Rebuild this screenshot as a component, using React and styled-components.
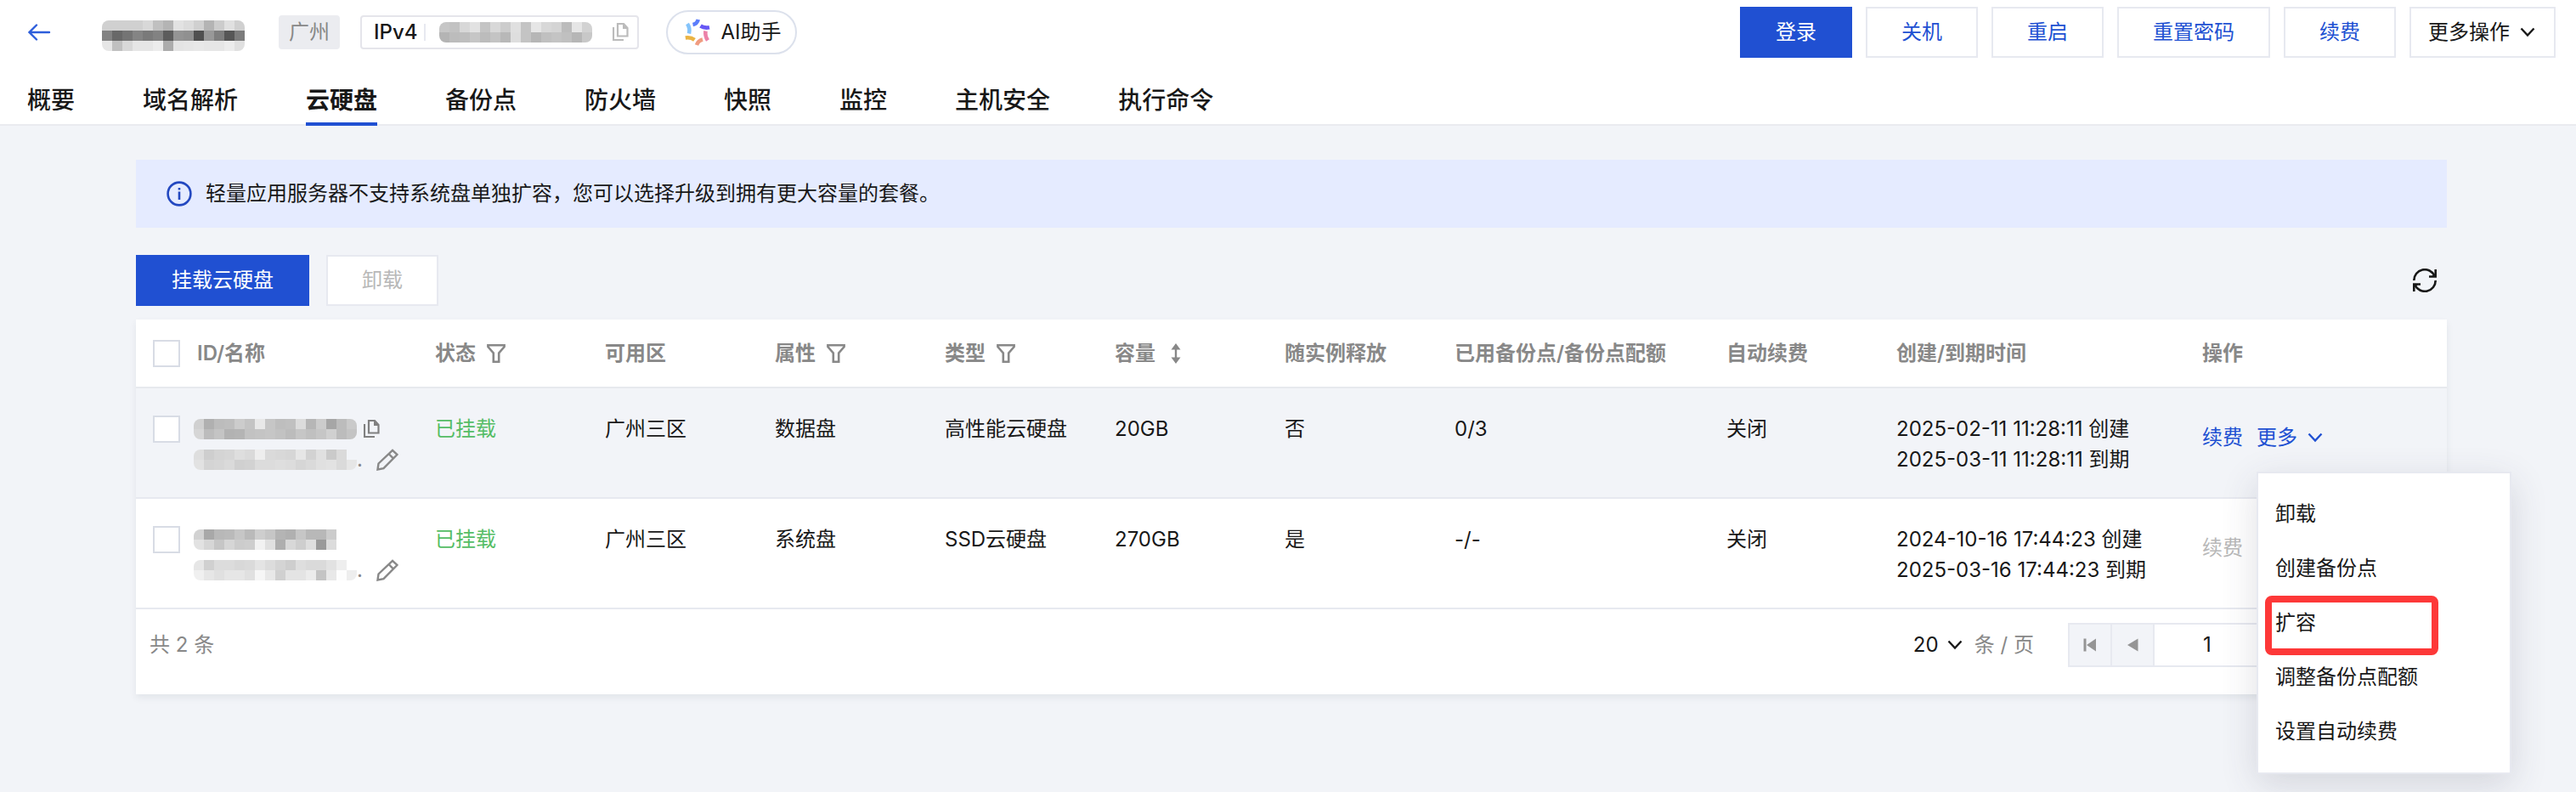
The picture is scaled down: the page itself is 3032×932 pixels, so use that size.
import React, { useState } from 'react';
import styled, { createGlobalStyle, css } from 'styled-components';

const tabs = ['概要', '域名解析', '云硬盘', '备份点', '防火墙', '快照', '监控', '主机安全', '执行命令'];

const columns = [
  { title: 'ID/名称', width: 280 },
  { title: '状态', width: 200, icon: 'filter' },
  { title: '可用区', width: 200 },
  { title: '属性', width: 200, icon: 'filter' },
  { title: '类型', width: 200, icon: 'filter' },
  { title: '容量', width: 200, icon: 'sort' },
  { title: '随实例释放', width: 200 },
  { title: '已用备份点/备份点配额', width: 320 },
  { title: '自动续费', width: 200 },
  { title: '创建/到期时间', width: 360 },
  { title: '操作', width: 308 },
];

const menuItems = ['卸载', '创建备份点', '扩容', '调整备份点配额', '设置自动续费'];

// masked strings, one hex shade per 12px cell
const masks = {
  instance: [
    'd0 d0 d0 d0 d8 c0 b4 e2 dc d0 b4 cc e0 d0',
    '82 68 74 84 7a 82 5c 94 90 50 98 7e 56 7c',
    'e6 c0 d8 e6 e6 ec ac e4 e6 e8 e6 e6 ec e0',
  ],
  ip: [
    'c6 c2 d8 e2 c4 d8 cc e0 c4 e6 d8 d4 bc e6 d2',
    'b4 bc be c6 bc c4 b8 de c4 b6 c0 c4 c0 b6 c8',
  ],
  disk1: [
    'd0 b0 bc be cc c4 e8 c6 be c0 dc b6 cc a6 bc ca',
    'd6 bc c4 b2 b4 c2 c4 c6 c2 bc c6 c0 c6 d0 bc c4',
  ],
  name1: [
    'de ce d4 d6 de da ee da d8 d6 e6 d2 e0 ca da ff',
    'e2 d4 d6 da d0 d2 dc dc de dc d6 da e0 e2 da e6',
  ],
  disk2: [
    'd2 a8 b8 ba c6 ba ce c6 b4 b0 c6 b8 b8 cc ff ff',
    'e2 d6 c6 d6 cc ce f2 e0 ae d8 ce de 9a dc ff ff',
  ],
  name2: [
    'e6 d0 dc dc d8 da e4 dc d4 ce de da da e2 ee ff',
    'f0 e6 e0 e6 e6 e0 f6 e8 d0 e4 e4 ec c4 e8 fd ee',
  ],
};

const disks = [
  {
    id: 'data',
    mask: [masks.disk1, masks.name1],
    copy: true,
    zone: '广州三区',
    attr: '数据盘',
    type: '高性能云硬盘',
    size: '20GB',
    release: '否',
    quota: '0/3',
    renew: '关闭',
    created: '2025-02-11 11:28:11 创建',
    expires: '2025-03-11 11:28:11 到期',
  },
  {
    id: 'system',
    mask: [masks.disk2, masks.name2],
    zone: '广州三区',
    attr: '系统盘',
    type: 'SSD云硬盘',
    size: '270GB',
    release: '是',
    quota: '-/-',
    renew: '关闭',
    created: '2024-10-16 17:44:23 创建',
    expires: '2025-03-16 17:44:23 到期',
    locked: true,
  },
];

function Mosaic({ rows }) {
  const cells = rows.map((row) => row.split(' '));
  return (
    <MosaicSvg
      width={cells[0].length * 12}
      height={cells.length * 12}
      shapeRendering="crispEdges"
      aria-hidden="true"
    >
      {cells.map((row, y) =>
        row.map((shade, x) => (
          <rect
            key={`${x}-${y}`}
            x={x * 12}
            y={y * 12}
            width="12"
            height="12"
            fill={shade === 'ff' ? 'none' : `#${shade}${shade}${shade}`}
          />
        ))
      )}
    </MosaicSvg>
  );
}

const ChevronIcon = () => (
  <svg width="18" height="12" viewBox="0 0 18 12" fill="none" stroke="currentColor" strokeWidth="2.4">
    <path d="M1.5 1.5 9 9.5l7.5-8" />
  </svg>
);

const BackIcon = () => (
  <svg width="28" height="20" viewBox="0 0 28 20" fill="none" stroke="currentColor" strokeWidth="2.4">
    <path d="M26 10H3M11 1.5 2.5 10l8.5 8.5" strokeLinecap="round" />
  </svg>
);

const CopyIcon = () => (
  <svg width="19" height="22" viewBox="0 0 19 22" fill="none" stroke="currentColor" strokeWidth="2.2">
    <path d="M6 1h7l4.5 5v9.5H6z" />
    <path d="M12 1v6h6z" fill="currentColor" stroke="none" />
    <path d="M1 5v15h12" />
  </svg>
);

const PencilIcon = () => (
  <svg width="26" height="26" viewBox="0 0 26 26" fill="none" stroke="currentColor" strokeWidth="2.4">
    <path d="M1.5 24.5 2.5 17.5 19 1.8 24.4 7 8.5 23.2z" />
    <path d="M14.5 6l5.4 5.4" />
  </svg>
);

const FilterIcon = () => (
  <svg width="22" height="22" viewBox="0 0 22 22" fill="none" stroke="currentColor" strokeWidth="2.6">
    <path d="M1.4 1.3H20.6V3L14.2 10.5V20.7H7.8V10.5L1.4 3z" />
  </svg>
);

const SortIcon = () => (
  <svg width="12" height="24" viewBox="0 0 12 24" fill="currentColor">
    <path d="M6 0l5.5 7.500H7.2v9h4.3L6 24 .5 16.5h4.3v-9H.5z" />
  </svg>
);

const InfoIcon = () => (
  <svg width="30" height="30" viewBox="0 0 30 30" fill="none" stroke="currentColor" strokeWidth="2.6">
    <circle cx="15" cy="15" r="13.4" />
    <path d="M15 12.5v9.500M15 8v2.6" />
  </svg>
);

const RefreshIcon = () => (
  <svg width="28" height="28" viewBox="0 0 28 28" fill="none" stroke="currentColor" strokeWidth="2.6">
    <path d="M1.3 14A12.7 12.7 0 0 1 25.5 8.5M26.7 14A12.7 12.7 0 0 1 2.5 19.5" />
    <path d="M26.7 1v8.5H19M1.3 27V18.5H9" />
    <path d="M27 5v5h-6zM1 23v-5h6z" fill="currentColor" stroke="none" />
  </svg>
);

const AssistantIcon = () => (
  <svg width="30" height="32" viewBox="0 0 30 32" fill="none" strokeWidth="4.6">
    <path d="M9.5 7Q14.5 6 15.8 1" stroke="#5b7dfb" />
    <path d="M18.5 8.5Q23 11.5 29 10.2" stroke="#6657f5" />
    <path d="M24.5 14.5Q23.5 20 27 25.5" stroke="#ec82a8" />
    <path d="M21 24.5Q15.5 26 14 31" stroke="#f09c80" />
    <path d="M.8 22.5Q7 21.5 11.5 24.8" stroke="#eab444" />
    <path d="M3 6Q6.5 11 5 17.5" stroke="#84c4fb" />
  </svg>
);

const FirstIcon = () => (
  <svg width="16" height="16" viewBox="0 0 16 16" fill="currentColor">
    <path d="M.5.5h3v15h-3zM15 .5v15L4 8z" />
  </svg>
);

const PrevIcon = () => (
  <svg width="16" height="16" viewBox="0 0 16 16" fill="currentColor">
    <path d="M14.5.5v15L2 8z" />
  </svg>
);

function Header() {
  return (
    <TopBar>
      <TitleRow>
        <BackLink href="#" aria-label="返回">
          <BackIcon />
        </BackLink>
        <InstanceName>
          <Mosaic rows={masks.instance} />
        </InstanceName>
        <Region>广州</Region>
        <IpBox>
          <IpLabel>IPv4</IpLabel>
          <Mosaic rows={masks.ip} />
          <IconButton $tone="#bbbbbb" aria-label="复制IP">
            <CopyIcon />
          </IconButton>
        </IpBox>
        <Assistant type="button">
          <AssistantIcon />
          AI助手
        </Assistant>
        <HeaderActions>
          <Button $primary>登录</Button>
          <Button>关机</Button>
          <Button>重启</Button>
          <Button>重置密码</Button>
          <Button>续费</Button>
          <MoreButton>
            更多操作
            <ChevronIcon />
          </MoreButton>
        </HeaderActions>
      </TitleRow>
      <Tabs>
        {tabs.map((tab) => (
          <Tab key={tab} href="#" $active={tab === '云硬盘'}>
            {tab}
          </Tab>
        ))}
      </Tabs>
    </TopBar>
  );
}

function RowMenu() {
  return (
    <Menu>
      {menuItems.map((item) => (
        <MenuItem key={item}>
          <MenuButton type="button">{item}</MenuButton>
          {item === '扩容' && <Highlight />}
        </MenuItem>
      ))}
    </Menu>
  );
}

function DiskRow({ disk, open, onToggle }) {
  return (
    <Row $hover={open}>
      <Cell>
        <Checkbox aria-label={`选择${disk.attr}`} />
      </Cell>
      <Cell>
        <IdLine>
          <Mosaic rows={disk.mask[0]} />
          {disk.copy && (
            <IconButton $tone="#808080" aria-label="复制ID">
              <CopyIcon />
            </IconButton>
          )}
        </IdLine>
        <IdLine>
          <Mosaic rows={disk.mask[1]} />
          <Ellipsis>.</Ellipsis>
          <IconButton $tone="#888888" aria-label="编辑名称">
            <PencilIcon />
          </IconButton>
        </IdLine>
      </Cell>
      <Cell>
        <Status>已挂载</Status>
      </Cell>
      <Cell>{disk.zone}</Cell>
      <Cell>{disk.attr}</Cell>
      <Cell>{disk.type}</Cell>
      <Cell>{disk.size}</Cell>
      <Cell>{disk.release}</Cell>
      <Cell>{disk.quota}</Cell>
      <Cell>{disk.renew}</Cell>
      <Cell>
        <div>{disk.created}</div>
        <div>{disk.expires}</div>
      </Cell>
      <Cell>
        <Operations>
          <LinkButton disabled={disk.locked}>续费</LinkButton>
          {!disk.locked && (
            <MenuAnchor>
              <LinkButton onClick={onToggle} aria-expanded={open}>
                更多
                <ChevronIcon />
              </LinkButton>
              {open && <RowMenu />}
            </MenuAnchor>
          )}
        </Operations>
      </Cell>
    </Row>
  );
}

function Pagination() {
  return (
    <Footer>
      <Total>共 2 条</Total>
      <PageSize>
        <SelectWrap>
          <Select defaultValue="20" aria-label="每页条数">
            <option>10</option>
            <option>20</option>
            <option>50</option>
          </Select>
          <ChevronIcon />
        </SelectWrap>
        条 / 页
      </PageSize>
      <Pager>
        <PageButton aria-label="首页">
          <FirstIcon />
        </PageButton>
        <PageButton aria-label="上一页">
          <PrevIcon />
        </PageButton>
        <PageField>
          <PageInput defaultValue="1" aria-label="页码" />
        </PageField>
        <PageButton aria-label="下一页" $flip>
          <PrevIcon />
        </PageButton>
        <PageButton aria-label="末页" $flip>
          <FirstIcon />
        </PageButton>
      </Pager>
    </Footer>
  );
}

function App() {
  const [openRow, setOpenRow] = useState('data');

  const toggleRow = (id) => {
    setOpenRow(openRow === id ? null : id);
  };

  return (
    <Page>
      <GlobalStyle />
      <Header />
      <Main>
        <Notice>
          <InfoIcon />
          轻量应用服务器不支持系统盘单独扩容，您可以选择升级到拥有更大容量的套餐。
        </Notice>
        <Toolbar>
          <Button $primary>挂载云硬盘</Button>
          <Button disabled>卸载</Button>
          <Refresh aria-label="刷新">
            <RefreshIcon />
          </Refresh>
        </Toolbar>
        <Panel>
          <Table>
            <colgroup>
              <Col $width={52} />
              {columns.map((column) => (
                <Col key={column.title} $width={column.width} />
              ))}
            </colgroup>
            <thead>
              <tr>
                <HeadCell>
                  <Checkbox aria-label="全选" />
                </HeadCell>
                {columns.map((column) => (
                  <HeadCell key={column.title}>
                    <HeadLabel $gap={column.icon === 'sort' ? 18 : 13}>
                      {column.title}
                      {column.icon === 'filter' && <FilterIcon />}
                      {column.icon === 'sort' && <SortIcon />}
                    </HeadLabel>
                  </HeadCell>
                ))}
              </tr>
            </thead>
            <tbody>
              {disks.map((disk) => (
                <DiskRow
                  key={disk.id}
                  disk={disk}
                  open={openRow === disk.id}
                  onToggle={() => toggleRow(disk.id)}
                />
              ))}
            </tbody>
          </Table>
          <Pagination />
        </Panel>
      </Main>
    </Page>
  );
}

const GlobalStyle = createGlobalStyle`
  * {
    box-sizing: border-box;
  }

  body {
    background: #f2f4f8;
    color: #181818;
    font-family: Inter, 'Noto Sans CJK SC', sans-serif;
    font-size: 24px;
    line-height: 36px;
    margin: 0;
  }

  button,
  input,
  select {
    color: inherit;
    font: inherit;
  }

  button {
    cursor: pointer;
  }

  svg {
    display: block;
    flex: none;
  }
`;

const Page = styled.div`
  min-height: 100vh;
`;

const MosaicSvg = styled.svg`
  border-radius: 8px;
`;

const TopBar = styled.header`
  background: #ffffff;
  border-bottom: 2px solid #eaebef;
`;

const TitleRow = styled.div`
  align-items: center;
  display: flex;
  padding: 8px 24px 0 32px;
`;

const BackLink = styled.a`
  color: #2d5edb;
`;

const InstanceName = styled.div`
  margin: 8px 40px 0 60px;
`;

const Region = styled.span`
  background: #ebecf0;
  border-radius: 4px;
  color: #888888;
  line-height: 40px;
  padding: 0 12px;
`;

const IpBox = styled.div`
  align-items: center;
  border: 2px solid #e5e5eb;
  border-radius: 4px;
  display: flex;
  height: 40px;
  margin-left: 24px;
  padding: 0 10px 0 14px;

  ${MosaicSvg} {
    margin-right: 24px;
  }
`;

const IpLabel = styled.span`
  border-right: 2px solid #e7e9f0;
  font-weight: 500;
  line-height: 20px;
  margin-right: 16px;
  padding-right: 8px;
`;

const IconButton = styled.button`
  background: none;
  border: 0;
  color: ${({ $tone }) => $tone};
  padding: 0;
`;

const Assistant = styled.button`
  align-items: center;
  background: #ffffff;
  border: 2px solid #dce1ec;
  border-radius: 26px;
  display: flex;
  gap: 12px;
  height: 52px;
  margin-left: 32px;
  padding: 0 16px 0 20px;
`;

const HeaderActions = styled.div`
  display: flex;
  gap: 16px;
  margin-left: auto;
`;

const buttonTone = ({ $primary }) =>
  $primary
    ? css`
        background: #2050d2;
        border-color: #2050d2;
        color: #ffffff;
      `
    : css`
        background: #ffffff;
        border-color: #e7e9f0;
        color: #2050d2;
      `;

const Button = styled.button`
  align-items: center;
  border: 2px solid;
  display: flex;
  height: 60px;
  padding: 0 40px;
  white-space: nowrap;
  ${buttonTone};

  &:disabled {
    color: #b8b8b8;
    cursor: default;
  }
`;

const MoreButton = styled(Button)`
  color: #181818;
  gap: 12px;
  padding: 0 22px 0 20px;
`;

const Tabs = styled.nav`
  display: flex;
  gap: 80px;
  padding: 20px 32px 0;
`;

const Tab = styled.a`
  color: inherit;
  font-size: 28px;
  font-weight: 500;
  line-height: 60px;
  margin-bottom: -2px;
  text-decoration: none;
  ${({ $active }) =>
    $active &&
    css`
      box-shadow: inset 0 -4px #2050d2;
      font-weight: 700;
    `};
`;

const Main = styled.main`
  padding: 40px 152px 40px 160px;
`;

const Notice = styled.div`
  align-items: center;
  background: #e5ebff;
  display: flex;
  gap: 16px;
  min-height: 80px;
  padding: 0 36px;

  svg {
    color: #2348c0;
  }
`;

const Toolbar = styled.div`
  display: flex;
  gap: 20px;
  padding: 32px 12px 16px 0;
`;

const Refresh = styled.button`
  background: none;
  border: 0;
  margin-left: auto;
  padding: 0;
`;

const Panel = styled.section`
  background: #ffffff;
  box-shadow: 0 4px 8px rgba(54, 58, 80, 0.08);
`;

const Table = styled.table`
  border-collapse: separate;
  border-spacing: 0;
  table-layout: fixed;
  width: 100%;
`;

const Col = styled.col`
  width: ${({ $width }) => $width}px;
`;

const Row = styled.tr`
  background: ${({ $hover }) => ($hover ? '#f2f4f8' : '#ffffff')};
`;

const HeadCell = styled.th`
  border-bottom: 2px solid #e7e9ee;
  color: #888888;
  font-weight: 600;
  height: 81px;
  padding: 0 0 0 20px;
  text-align: left;
`;

const HeadLabel = styled.span`
  align-items: center;
  display: flex;
  gap: ${({ $gap }) => $gap}px;
`;

const Cell = styled.td`
  border-bottom: 2px solid #e7e9f0;
  padding: 30px 0 26px 20px;
  vertical-align: top;
  white-space: nowrap;
`;

const Checkbox = styled.input.attrs({ type: 'checkbox' })`
  appearance: none;
  background: #ffffff;
  border: 2px solid #d8dce5;
  display: block;
  height: 32px;
  margin: 2px 0;
  width: 32px;
`;

const IdLine = styled.div`
  align-items: center;
  display: flex;
  gap: 8px;
  height: 36px;
  margin-left: -4px;
`;

const Ellipsis = styled.span`
  color: #888888;
  margin: 0 8px 0 -8px;
`;

const Status = styled.span`
  color: #55bd65;
`;

const Operations = styled.div`
  display: flex;
  gap: 16px;
  padding-top: 10px;
`;

const LinkButton = styled.button`
  align-items: center;
  background: none;
  border: 0;
  color: #2050d2;
  display: flex;
  gap: 12px;
  padding: 0;

  &:disabled {
    color: #b8b8b8;
    cursor: default;
  }
`;

const MenuAnchor = styled.div`
  position: relative;
`;

const Menu = styled.ul`
  background: #ffffff;
  border: 2px solid #e7e9f0;
  box-shadow: 0 12px 40px rgba(54, 58, 80, 0.16);
  left: 0;
  list-style: none;
  margin: 0;
  padding: 16px 0;
  position: absolute;
  top: calc(100% + 22px);
  width: 300px;
  z-index: 2;
`;

const MenuItem = styled.li`
  position: relative;
`;

const MenuButton = styled.button`
  background: none;
  border: 0;
  display: block;
  height: 64px;
  padding: 0 20px;
  text-align: left;
  width: 100%;
`;

const Highlight = styled.span`
  border: 8px solid #fd3838;
  border-radius: 8px;
  height: 70px;
  left: 8px;
  pointer-events: none;
  position: absolute;
  top: 0;
  width: 204px;
`;

const Footer = styled.footer`
  align-items: center;
  color: #888888;
  display: flex;
  padding: 16px 20px 32px 16px;
`;

const Total = styled.span`
  margin-right: auto;
`;

const PageSize = styled.div`
  align-items: center;
  display: flex;
  gap: 14px;
  margin-right: 40px;
`;

const SelectWrap = styled.label`
  align-items: center;
  color: #181818;
  display: flex;
  gap: 10px;
`;

const Select = styled.select`
  appearance: none;
  background: none;
  border: 0;
  padding: 0;
  width: 30px;
`;

const Pager = styled.div`
  display: flex;
  height: 52px;
`;

const PageButton = styled.button`
  align-items: center;
  background: #f2f4f8;
  border: 2px solid #e7e9f0;
  color: #959595;
  display: flex;
  justify-content: center;
  padding: 0;
  width: 52px;

  & + & {
    margin-left: -2px;
  }

  svg {
    transform: ${({ $flip }) => ($flip ? 'scaleX(-1)' : 'none')};
  }
`;

const PageField = styled.div`
  align-items: center;
  border: 2px solid #e7e9f0;
  border-width: 2px 0;
  display: flex;
  width: 222px;
`;

const PageInput = styled.input`
  background: none;
  border: 0;
  color: #181818;
  padding: 0;
  text-align: center;
  width: 124px;
`;

export default App;
